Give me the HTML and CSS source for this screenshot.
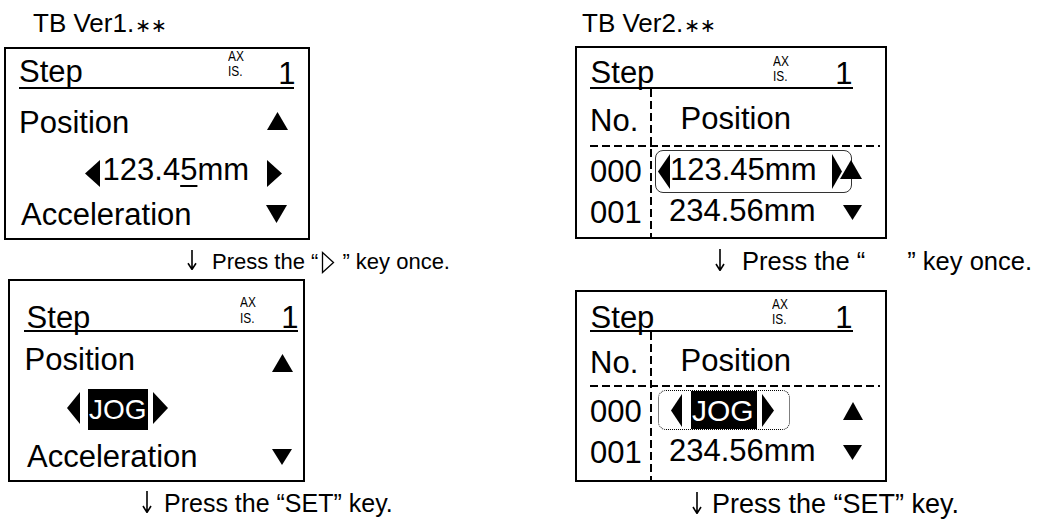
FILE: index.html
```html
<!DOCTYPE html>
<html lang="en">
<head>
<meta charset="utf-8">
<title>Teaching box – JOG step</title>
<link rel="stylesheet" href="styles.css">
</head>
<body>
<main class="page">
  <section class="col col-1">
    <div class="ver">TB Ver1.<span class="stars">∗∗</span></div>

    <div class="screen scr-a">
      <div class="hdr">
        <span class="t step">Step</span>
        <span class="axis"><span>AX</span><span>IS.</span></span>
        <span class="t num">1</span>
      </div>
      <div class="row pos">
        <span class="t">Position</span>
        <svg class="up" viewBox="0 0 21 18" width="21" height="18"><path d="M10.5 0L21 18H0Z"/></svg>
      </div>
      <div class="row val">
        <svg class="al" viewBox="0 0 15 27" width="15" height="27"><path d="M15 0V27L0 13.5Z"/></svg>
        <span class="t txt">123.4<span class="cur">5</span>mm</span>
        <svg class="ar" viewBox="0 0 15 27" width="15" height="27"><path d="M0 0L15 13.5L0 27Z"/></svg>
      </div>
      <div class="row acc">
        <span class="t">Acceleration</span>
        <svg class="dn" viewBox="0 0 21 18" width="21" height="18"><path d="M0 0H21L10.5 18Z"/></svg>
      </div>
    </div>

    <p class="cap cap-1"><svg class="arrow" viewBox="0 0 10 20" width="10" height="20"><path d="M5 0V19.2M1 13.2L5 19.4L9 13.2"/></svg>Press the “<svg class="key" viewBox="0 0 14 23" width="14" height="23"><path d="M1.5 1.5L12.5 11.5L1.5 21.5Z"/></svg>” key once.</p>

    <div class="screen scr-b">
      <div class="hdr">
        <span class="t step">Step</span>
        <span class="axis"><span>AX</span><span>IS.</span></span>
        <span class="t num">1</span>
      </div>
      <div class="row pos">
        <span class="t">Position</span>
        <svg class="up" viewBox="0 0 21 18" width="21" height="18"><path d="M10.5 0L21 18H0Z"/></svg>
      </div>
      <div class="row val">
        <svg class="al" viewBox="0 0 13 32" width="13" height="32"><path d="M13 0V32L0 16Z"/></svg>
        <span class="jog"><span class="t">JOG</span></span>
        <svg class="ar" viewBox="0 0 15 32" width="15" height="32"><path d="M0 0L15 16L0 32Z"/></svg>
      </div>
      <div class="row acc">
        <span class="t">Acceleration</span>
        <svg class="dn" viewBox="0 0 20 16" width="20" height="16"><path d="M0 0H20L10 16Z"/></svg>
      </div>
    </div>

    <p class="cap cap-2"><svg class="arrow" viewBox="0 0 10 22" width="10" height="22"><path d="M5 0V21.2M1 15L5 21.4L9 15"/></svg>Press the “SET” key.</p>
  </section>

  <section class="col col-2">
    <div class="ver">TB Ver2.<span class="stars">∗∗</span></div>

    <div class="screen scr-c">
      <div class="hdr">
        <span class="t step">Step</span>
        <span class="axis"><span>AX</span><span>IS.</span></span>
        <span class="t num">1</span>
      </div>
      <div class="tbl">
        <div class="t-row t-head">
          <span class="c-no"><span class="t">No.</span></span>
          <span class="c-main"><span class="t">Position</span></span>
        </div>
        <div class="hdash"></div>
        <div class="t-row r0">
          <span class="c-no"><span class="t">000</span></span>
          <span class="c-main">
            <span class="rect">
              <svg class="al" viewBox="0 0 12 35" width="12" height="35"><path d="M12 0V35L0 17.5Z"/></svg>
              <span class="t">123.45mm</span>
              <svg class="ar" viewBox="0 0 10 35" width="10" height="35"><path d="M0 0L10 17.5L0 35Z"/></svg>
            </span>
            <svg class="up" viewBox="0 0 22 19" width="22" height="19"><path d="M11 0L22 19H0Z"/></svg>
          </span>
        </div>
        <div class="t-row r1">
          <span class="c-no"><span class="t">001</span></span>
          <span class="c-main">
            <span class="t">234.56mm</span>
            <svg class="dn" viewBox="0 0 19 15" width="19" height="15"><path d="M0 0H19L9.5 15Z"/></svg>
          </span>
        </div>
      </div>
    </div>

    <p class="cap cap-3"><svg class="arrow" viewBox="0 0 10 22" width="10" height="22"><path d="M5 0V21.2M1 15L5 21.4L9 15"/></svg>Press the “<span class="blank"></span>” key once.</p>

    <div class="screen scr-d">
      <div class="hdr">
        <span class="t step">Step</span>
        <span class="axis"><span>AX</span><span>IS.</span></span>
        <span class="t num">1</span>
      </div>
      <div class="tbl">
        <div class="t-row t-head">
          <span class="c-no"><span class="t">No.</span></span>
          <span class="c-main"><span class="t">Position</span></span>
        </div>
        <div class="hdash"></div>
        <div class="t-row r0">
          <span class="c-no"><span class="t">000</span></span>
          <span class="c-main">
            <span class="rect">
              <svg class="al" viewBox="0 0 11 33" width="11" height="33"><path d="M11 0V33L0 16.5Z"/></svg>
              <span class="jog"><span class="t">JOG</span></span>
              <svg class="ar" viewBox="0 0 12 33" width="12" height="33"><path d="M0 0L12 16.5L0 33Z"/></svg>
            </span>
            <svg class="up" viewBox="0 0 20 18" width="20" height="18"><path d="M10 0L20 18H0Z"/></svg>
          </span>
        </div>
        <div class="t-row r1">
          <span class="c-no"><span class="t">001</span></span>
          <span class="c-main">
            <span class="t">234.56mm</span>
            <svg class="dn" viewBox="0 0 19 15" width="19" height="15"><path d="M0 0H19L9.5 15Z"/></svg>
          </span>
        </div>
      </div>
    </div>

    <p class="cap cap-4"><svg class="arrow" viewBox="0 0 10 22" width="10" height="22"><path d="M5 0V21.2M1 15L5 21.4L9 15"/></svg>Press the “SET” key.</p>
  </section>
</main>
</body>
</html>
```

FILE: styles.css
```css
* { box-sizing: border-box; }

body {
  margin: 0;
  background: #fff;
  color: #000;
  font-family: "Liberation Sans", Arial, sans-serif;
}

.page {
  display: grid;
  grid-template-columns: 571px 1fr;
  padding-left: 4px;
  width: 1041px;
  height: 520px;
  overflow: hidden;
}

.col {
  display: flex;
  flex-direction: column;
  align-items: flex-start;
}

/* version titles */
.ver {
  font-size: 26px;
  line-height: 30px;
  margin-top: 8px;
  white-space: nowrap;
}
.col-1 .ver { padding-left: 29px; }
.col-2 .ver { padding-left: 7px; }
.stars {
  font-family: "DejaVu Sans", sans-serif;
  font-size: 19px;
  margin-left: 1px;
}

/* LCD screens */
.screen {
  border: 2px solid #000;
  display: flex;
  flex-direction: column;
  font-size: 31px;
  flex: none;
}

.t {
  display: inline-block;
  line-height: 31px;
  white-space: nowrap;
  flex: none;
}

svg { display: block; flex: none; fill: #000; }

.hdr {
  display: flex;
  align-items: flex-start;
  border-bottom: 2px solid #000;
  flex: none;
}
.axis {
  display: flex;
  flex-direction: column;
  font-size: 14px;
  line-height: 15.6px;
  margin-left: auto;
  transform: scaleX(0.85);
  transform-origin: 0 0;
}

.row {
  display: flex;
  align-items: flex-start;
  height: 31px;
  flex: none;
}
.pos, .acc { justify-content: space-between; }

.cur {
  text-decoration: underline;
  text-decoration-thickness: 2px;
  text-underline-offset: 5px;
}

.jog {
  display: flex;
  align-items: center;
  background: #000;
  color: #fff;
  flex: none;
}

/* screen A : Ver1, value */
.scr-a { width: 306px; height: 193px; margin-top: 7px; }
.scr-a .hdr { height: 40px; margin: 0 14px 0 13px; }
.scr-a .step { margin-top: 7px; }
.scr-a .axis { margin-top: -0.5px; }
.scr-a .num { margin: 9px -1.6px 0 31.6px; }
.scr-a .pos { margin-top: 18px; padding: 0 20px 0 13px; }
.scr-a .pos .up { margin-top: 5px; }
.scr-a .val { margin-top: 16px; padding: 0 26px 0 79px; }
.scr-a .val .al { margin-top: 6px; }
.scr-a .val .txt { margin-left: 2.6px; }
.scr-a .val .ar { margin-left: auto; margin-top: 6px; }
.scr-a .acc { margin-top: 14px; padding: 0 21px 0 15px; }
.scr-a .acc .dn { margin-top: 6px; }

/* screen B : Ver1, JOG */
.scr-b { width: 297px; height: 203px; margin: 1.6px 0 0 4px; }
.scr-b .hdr { height: 51px; margin: 0 5px 0 14px; padding-left: 2.6px; }
.scr-b .step { margin-top: 21px; }
.scr-b .axis { margin-top: 14.25px; }
.scr-b .num { margin: 21px -0.6px 0 22.6px; }
.scr-b .pos { margin-top: 12px; padding: 0 10px 0 14.6px; }
.scr-b .pos .up { margin-top: 10px; }
.scr-b .val { height: 41px; margin-top: 14px; padding-left: 57px; }
.scr-b .val .al { margin-top: 3px; }
.scr-b .jog { margin-left: 8px; width: 60px; height: 41px; padding-left: 1px; font-size: 28px; }
.scr-b .val .ar { margin-left: 5px; margin-top: 3px; }
.scr-b .acc { margin-top: 11px; padding: 0 11px 0 17px; }
.scr-b .acc .dn { margin-top: 8px; }

/* Ver2 table screens */
.tbl {
  flex: 1;
  background-image: linear-gradient(#000 8px, transparent 8px);
  background-size: 2px 12px;
  background-repeat: repeat-y;
  background-position: 73px 0;
}
.t-row {
  display: flex;
  align-items: flex-start;
  height: 31px;
}
.c-no { width: 75px; flex: none; padding-left: 13px; }
.c-main { flex: 1; display: flex; align-items: flex-start; }
.t-head .c-main { padding-left: 28.6px; }
.hdash {
  height: 2px;
  flex: none;
  margin: 0 5px 0 13px;
  background-image: linear-gradient(to right, #000 8px, transparent 8px);
  background-size: 12px 2px;
  background-repeat: repeat-x;
}
.rect {
  display: flex;
  align-items: flex-start;
  flex: none;
  border-radius: 8px;
}
.r1 .c-main { padding-left: 17px; }
.r1 .dn { margin: 10px 23px 0 auto; }

/* screen C : Ver2, value */
.scr-c { width: 312px; height: 193px; margin-top: 6px; }
.scr-c .hdr { height: 41px; margin: 0 32px 0 13px; padding-left: 0.6px; }
.scr-c .step { margin-top: 9px; }
.scr-c .axis { margin-top: 5.75px; }
.scr-c .num { margin: 10px 0.4px 0 43.6px; }
.scr-c .t-head { margin-top: 14px; }
.scr-c .hdash { margin-top: 11px; }
.scr-c .r0 { margin-top: 7px; }
.scr-c .rect {
  margin: -4px 0 0 3px;
  width: 197px;
  height: 43px;
  border: 1px solid #333;
}
.scr-c .rect .al { margin: 3px 0 0 2px; }
.scr-c .rect .t { margin-top: 3px; }
.scr-c .rect .ar { margin: 3px 9px 0 auto; }
.scr-c .r0 .up { margin: 6px 0 0 -12px; }
.scr-c .r1 { margin-top: 10px; }

/* screen D : Ver2, JOG */
.scr-d { width: 312px; height: 192px; margin-top: 14px; }
.scr-d .hdr { height: 40px; margin: 0 32px 0 13px; padding-left: 0.6px; }
.scr-d .step { margin-top: 10px; }
.scr-d .axis { margin-top: 4.75px; }
.scr-d .num { margin: 10px 0.4px 0 44.6px; }
.scr-d .t-head { margin-top: 13px; }
.scr-d .hdash { margin-top: 9px; }
.scr-d .r0 { margin-top: 7px; }
.scr-d .rect {
  margin: -4px 0 0 6px;
  width: 132px;
  height: 40px;
  border: 1px dotted #000;
}
.scr-d .rect .al { margin: 3px 0 0 12px; }
.scr-d .jog { margin-left: 9px; width: 66px; height: 38px; padding-left: 1px; font-size: 30px; }
.scr-d .rect .ar { margin: 3px 0 0 5px; }
.scr-d .r0 .up { margin: 8px 22px 0 auto; }
.scr-d .r1 { margin-top: 10px; }

/* captions */
.cap {
  line-height: 30px;
  margin: 0;
  white-space: nowrap;
}
.arrow {
  display: inline-block;
  vertical-align: -1px;
  fill: none;
  stroke: #000;
  stroke-width: 1.6;
}
.cap-1 { font-size: 22px; margin-top: 7.4px; padding-left: 183px; }
.cap-1 .arrow { margin-right: 15px; }
.cap-2 { font-size: 25px; margin-top: 6.3px; padding-left: 138px; }
.cap-2 .arrow { margin-right: 12px; }
.cap-3 { font-size: 25.5px; margin-top: 7px; padding-left: 140px; }
.cap-3 .arrow { margin-right: 17px; }
.cap-4 { font-size: 27px; margin-top: 6.5px; padding-left: 117px; }
.cap-4 .arrow { margin-right: 10px; }

.key {
  display: inline-block;
  vertical-align: -5px;
  margin: 0 7px 0 3px;
  fill: none;
  stroke: #000;
  stroke-width: 1.3;
}
.blank { display: inline-block; width: 42px; }
```
